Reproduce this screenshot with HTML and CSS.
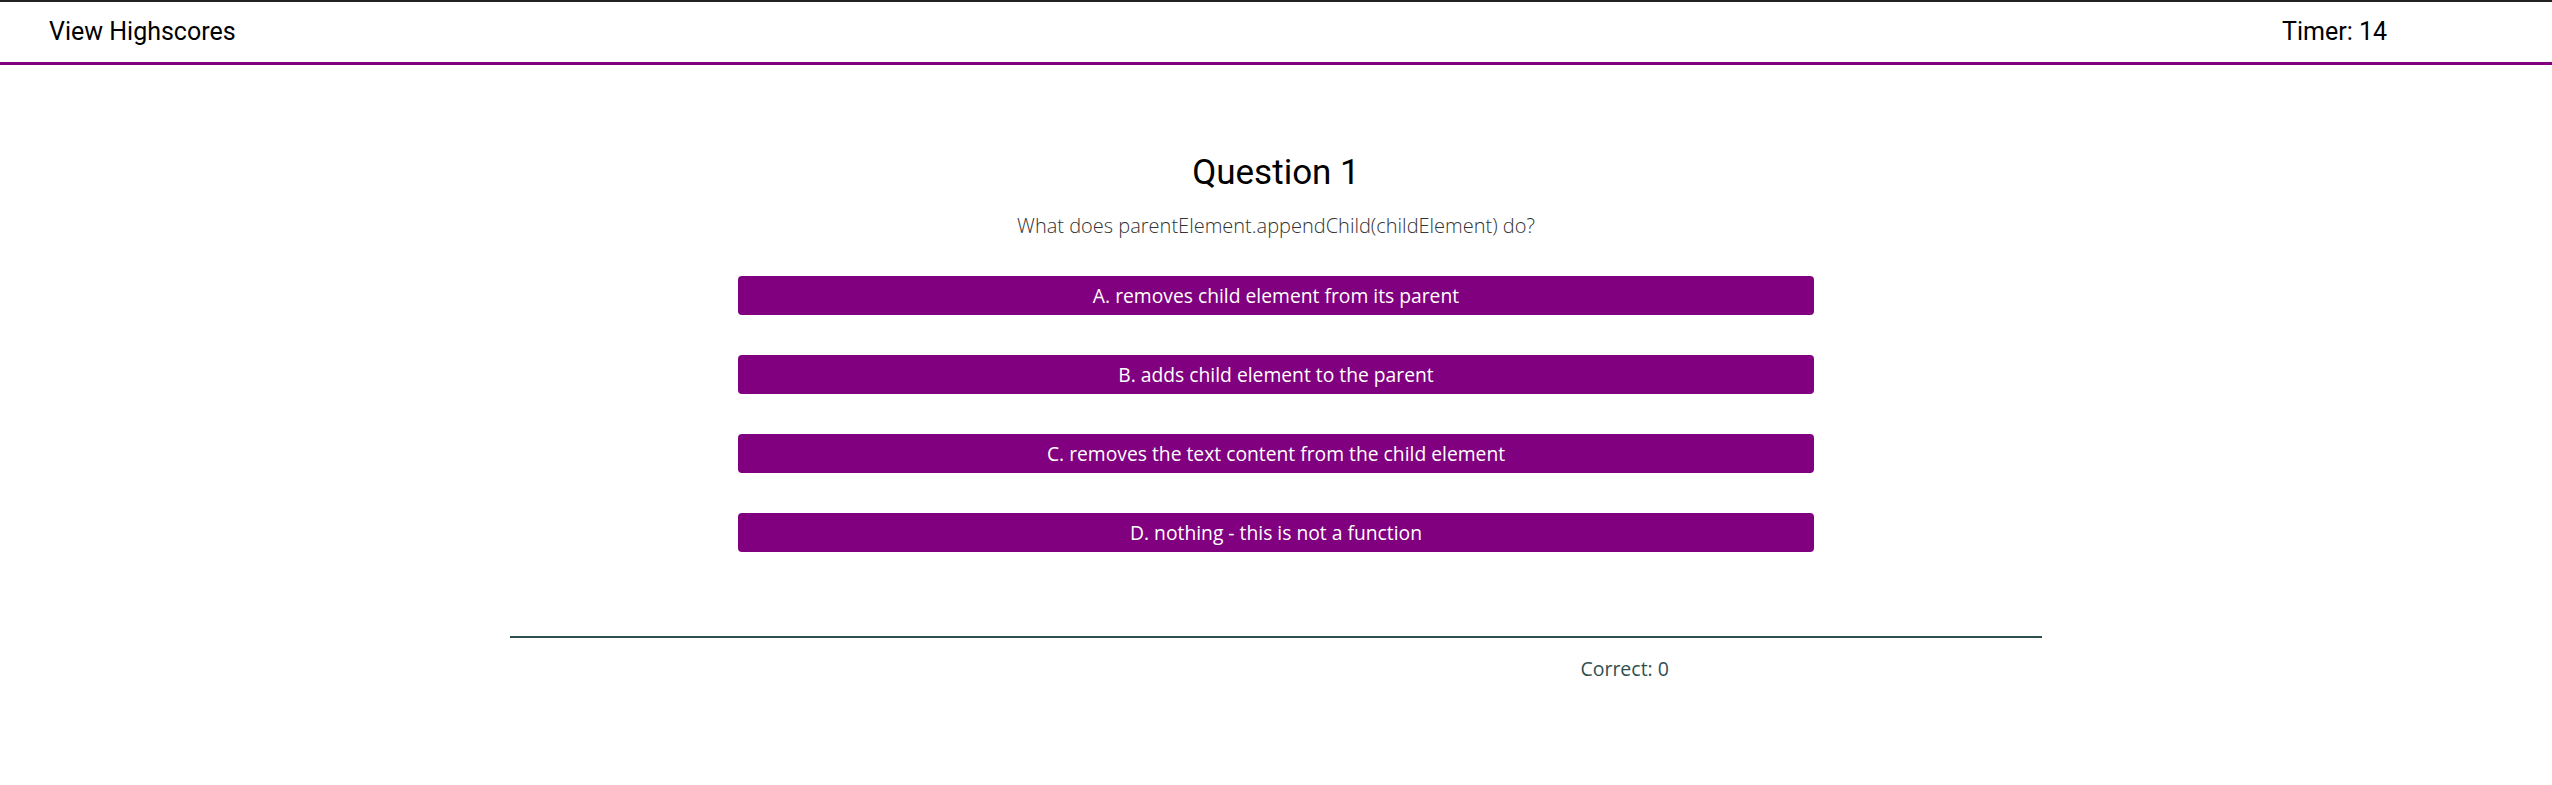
FILE: index.html
```html
<!DOCTYPE html>
<html lang="en">
<head>
<meta charset="utf-8">
<title>Code Quiz</title>
<link rel="stylesheet" href="styles.css">
</head>
<body>
<header class="topbar">
  <a class="highscores" href="#">View Highscores</a>
  <div class="timer">Timer: 14</div>
</header>
<main class="quiz">
  <h1 class="q-title">Question 1</h1>
  <p class="q-text">What does parentElement.appendChild(childElement) do?</p>
  <div class="answers">
    <button class="answer">A. removes child element from its parent</button>
    <button class="answer">B. adds child element to the parent</button>
    <button class="answer">C. removes the text content from the child element</button>
    <button class="answer">D. nothing - this is not a function</button>
  </div>
</main>
<footer class="result">
  <div class="rule"></div>
  <div class="score">Correct: 0</div>
</footer>
</body>
</html>
```
FILE: styles.css
```css
* { box-sizing: border-box; }
html, body { margin: 0; padding: 0; background: #fff; }
body {
  border-top: 2px solid #222;
  font-family: "Open Sans", sans-serif;
  color: #2f4f4f;
}
.topbar {
  display: flex;
  justify-content: space-between;
  align-items: center;
  height: 63px;
  padding: 0 165px 0 49px;
  border-bottom: 3px solid #800080;
}
.highscores, .timer {
  font-family: Roboto, sans-serif;
  font-size: 25px;
  color: #000;
  text-decoration: none;
  padding-bottom: 2px;
}
.quiz {
  display: flex;
  flex-direction: column;
  align-items: center;
  padding-top: 88px;
}
.q-title {
  font-family: Roboto, sans-serif;
  font-weight: 400;
  font-size: 35px;
  color: #000;
  margin: 0;
  line-height: 40px;
}
.q-text {
  font-weight: 300;
  font-size: 20px;
  color: #333;
  margin: 20px 0 0;
  line-height: 26px;
}
.answers {
  display: flex;
  flex-direction: column;
  gap: 40px;
  width: 1076px;
  margin-top: 37px;
}
.answer {
  height: 39px;
  border: none;
  border-radius: 4px;
  background: #800080;
  color: #fff;
  font-family: "Open Sans", sans-serif;
  font-size: 19.3px;
  font-weight: 500;
  padding: 0;
}
.result {
  width: 60%;
  margin: 84px auto 0;
}
.rule {
  height: 2px;
  background: #2f4f4f;
}
.score {
  margin-top: 17px;
  padding-left: 1070px;
  font-size: 19.5px;
  color: #2f4f4f;
}
```
